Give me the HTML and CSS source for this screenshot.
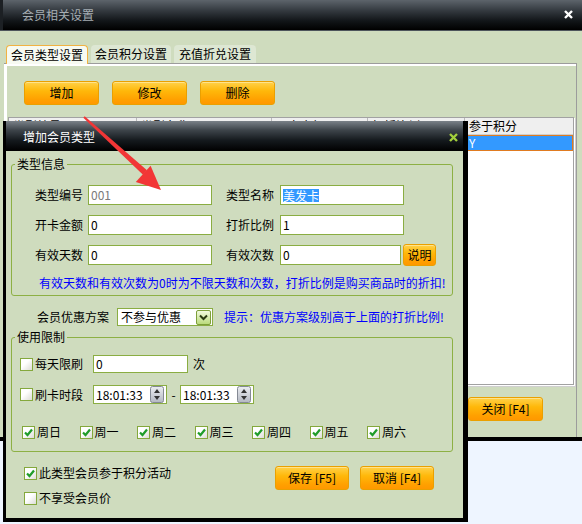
FILE: index.html
```html
<!DOCTYPE html>
<html lang="zh-CN">
<head>
<meta charset="utf-8">
<title>会员相关设置</title>
<link rel="stylesheet" href="styles.css">
</head>
<body>
<div class="desk">
  <div class="win">
    <div class="win-title">
      <span class="win-name">会员相关设置</span>
      <svg class="win-x" width="9" height="9" viewBox="0 0 9 9"><path d="M1 1L8 8M8 1L1 8" stroke="#fff" stroke-width="2.4"/></svg>
    </div>
    <div class="win-body">
      <div class="tabs">
        <div class="tab active">会员类型设置</div>
        <div class="tab">会员积分设置</div>
        <div class="tab">充值折兑设置</div>
      </div>
      <div class="panel">
        <div class="toolbar">
          <button class="obtn tb">增加</button>
          <button class="obtn tb">修改</button>
          <button class="obtn tb">删除</button>
        </div>
        <div class="grid">
          <div class="grow head">
            <div class="gc">类型编号</div><div class="gc">类型名称</div><div class="gc">开卡金额</div><div class="gc">打折比例</div><div class="gc">参于积分</div>
          </div>
          <div class="grow sel">
            <div class="gc">001</div><div class="gc">美发卡</div><div class="gc">0</div><div class="gc">1</div><div class="gc">Y</div>
          </div>
        </div>
        <div class="foot"><button class="obtn fb">关闭 [F4]</button></div>
      </div>
    </div>
  </div>

  <div class="dialog">
    <div class="dlg-title">
      <span>增加会员类型</span>
      <svg class="dlg-x" width="9" height="9" viewBox="0 0 9 9"><path d="M1 1L8 8M8 1L1 8" stroke="#a3cf3c" stroke-width="2.4"/></svg>
    </div>
    <div class="dlg-body">
      <fieldset class="group g1">
        <legend>类型信息</legend>
        <div class="gin in1">
          <div class="frow">
            <span class="lbl">类型编号</span><span class="inp w124 gray">001</span>
            <span class="lbl l2">类型名称</span><span class="inp w124"><span class="hl">美发卡</span></span>
          </div>
          <div class="frow">
            <span class="lbl">开卡金额</span><span class="inp w124">0</span>
            <span class="lbl l2">打折比例</span><span class="inp w124">1</span>
          </div>
          <div class="frow">
            <span class="lbl">有效天数</span><span class="inp w124">0</span>
            <span class="lbl l2">有效次数</span><span class="inp w121">0</span><button class="obtn sm">说明</button>
          </div>
          <div class="note">有效天数和有效次数为0时为不限天数和次数，打折比例是购买商品时的折扣!</div>
        </div>
      </fieldset>

      <div class="plan">
        <span class="plbl">会员优惠方案</span>
        <span class="select"><span class="sv">不参与优惠</span>
          <svg class="dd" width="15" height="15" viewBox="0 0 15 15"><defs><linearGradient id="gdd" x1="0" y1="0" x2="0" y2="1"><stop offset="0" stop-color="#f4fbe2"/><stop offset="1" stop-color="#b9da78"/></linearGradient></defs><rect x="0.5" y="0.5" width="14" height="14" rx="1.5" fill="url(#gdd)" stroke="#7e9f3a"/><path d="M4 5.5L7.5 9L11 5.5" fill="none" stroke="#2b3a12" stroke-width="2"/></svg>
        </span>
        <span class="hint">提示：优惠方案级别高于上面的打折比例!</span>
      </div>

      <fieldset class="group g2">
        <legend>使用限制</legend>
        <div class="gin in2">
          <div class="urow r1">
            <span class="cb"></span><span class="ct">每天限刷</span><span class="inp w95">0</span><span class="unit">次</span>
          </div>
          <div class="urow r2">
            <span class="cb"></span><span class="ct">刷卡时段</span>
            <span class="inp time"><span>18:01:33</span><svg class="spin" width="14" height="17" viewBox="0 0 14 17"><defs><linearGradient id="gsp" x1="0" y1="0" x2="0" y2="1"><stop offset="0" stop-color="#eceef2"/><stop offset="1" stop-color="#b4b8c2"/></linearGradient></defs><rect x="0.5" y="0.5" width="13" height="16" rx="2" fill="url(#gsp)" stroke="#858a94"/><path d="M7 3L10 7H4Z M4 10H10L7 14Z" fill="#333"/></svg></span>
            <span class="dash">-</span>
            <span class="inp time"><span>18:01:33</span><svg class="spin" width="14" height="17" viewBox="0 0 14 17"><rect x="0.5" y="0.5" width="13" height="16" rx="2" fill="url(#gsp)" stroke="#858a94"/><path d="M7 3L10 7H4Z M4 10H10L7 14Z" fill="#333"/></svg></span>
          </div>
          <div class="days">
            <span class="day"><span class="cb on"><svg width="11" height="11" viewBox="0 0 11 11"><path d="M2 5.5L4.5 8L9 2.5" fill="none" stroke="#1f9c2a" stroke-width="2.2"/></svg></span>周日</span>
            <span class="day"><span class="cb on"><svg width="11" height="11" viewBox="0 0 11 11"><path d="M2 5.5L4.5 8L9 2.5" fill="none" stroke="#1f9c2a" stroke-width="2.2"/></svg></span>周一</span>
            <span class="day"><span class="cb on"><svg width="11" height="11" viewBox="0 0 11 11"><path d="M2 5.5L4.5 8L9 2.5" fill="none" stroke="#1f9c2a" stroke-width="2.2"/></svg></span>周二</span>
            <span class="day"><span class="cb on"><svg width="11" height="11" viewBox="0 0 11 11"><path d="M2 5.5L4.5 8L9 2.5" fill="none" stroke="#1f9c2a" stroke-width="2.2"/></svg></span>周三</span>
            <span class="day"><span class="cb on"><svg width="11" height="11" viewBox="0 0 11 11"><path d="M2 5.5L4.5 8L9 2.5" fill="none" stroke="#1f9c2a" stroke-width="2.2"/></svg></span>周四</span>
            <span class="day"><span class="cb on"><svg width="11" height="11" viewBox="0 0 11 11"><path d="M2 5.5L4.5 8L9 2.5" fill="none" stroke="#1f9c2a" stroke-width="2.2"/></svg></span>周五</span>
            <span class="day"><span class="cb on"><svg width="11" height="11" viewBox="0 0 11 11"><path d="M2 5.5L4.5 8L9 2.5" fill="none" stroke="#1f9c2a" stroke-width="2.2"/></svg></span>周六</span>
          </div>
        </div>
      </fieldset>

      <div class="bottom">
        <div class="opts">
          <div class="opt"><span class="cb on"><svg width="11" height="11" viewBox="0 0 11 11"><path d="M2 5.5L4.5 8L9 2.5" fill="none" stroke="#1f9c2a" stroke-width="2.2"/></svg></span>此类型会员参于积分活动</div>
          <div class="opt o2"><span class="cb"></span>不享受会员价</div>
        </div>
        <button class="obtn db">保存 [F5]</button>
        <button class="obtn db">取消 [F4]</button>
      </div>
    </div>
  </div>

  <svg class="arrow" width="582" height="524" viewBox="0 0 582 524">
    <polygon points="83.3,117.7 84.7,116.3 147,170.3 143,174.7" fill="#f23636"/>
    <polygon points="161,190 135.8,182 150.6,165.8" fill="#f23636"/>
  </svg>
</div>
</body>
</html>
```

FILE: styles.css
```css
* { box-sizing: border-box; }

body {
  margin: 0;
  background: #eef5ff;
  font: 12px/14px "Noto Sans CJK SC", "Noto Sans", sans-serif;
  color: #000;
}

button {
  font: inherit;
  padding: 0;
  margin: 0;
  color: #000;
  cursor: default;
}

.desk {
  position: relative;
  width: 582px;
  height: 524px;
  overflow: hidden;
}

/* ---------- main window ---------- */
.win {
  width: 582px;
  height: 441px;
  display: flex;
  flex-direction: column;
  background: #cfdcbe;
  border-bottom: 4px solid #000;
}

.win-title {
  height: 31px;
  flex: none;
  display: flex;
  align-items: center;
  justify-content: space-between;
  padding: 0 9px 1px 22px;
  background: linear-gradient(#5d646b 0%, #343a40 35%, #111518 70%, #000 100%);
  border-bottom: 1px solid #4d555b;
  box-shadow: inset 3px 0 0 #1c2024;
  color: #a6aeb4;
}

.win-body {
  flex: 1;
  display: flex;
  flex-direction: column;
  padding: 14px 5px 0 4px;
}

.tabs {
  display: flex;
  gap: 3px;
  height: 18px;
  margin-left: 2px;
}

.tab {
  height: 18px;
  width: 80px;
  display: flex;
  align-items: center;
  justify-content: center;
  background: #dde7d3;
  border-radius: 4px 4px 0 0;
}

.tab:first-child, .tab:last-child { width: 82px; }

.tab.active {
  background: #f7faf1;
  border: 1px solid #f1b242;
  border-bottom: none;
  height: 19px;
  position: relative;
  z-index: 1;
}

.panel {
  flex: 1;
  border-top: 1px solid #9c9c9c;
  border-right: 1px solid #9c9c9c;
  box-shadow: inset 3px 2px 0 #fff;
  padding: 17px 2px 0 4px;
  display: flex;
  flex-direction: column;
}

.toolbar {
  display: flex;
  gap: 13px;
  padding-left: 16px;
}

.obtn {
  height: 24px;
  border: 1px solid #eaa000;
  border-radius: 3px;
  background: linear-gradient(#ffd24a 0%, #ffb80a 40%, #ffa000 80%, #ff9800 100%);
  box-shadow: inset 0 1px 0 #ffe38a;
  display: flex;
  align-items: center;
  justify-content: center;
}

.tb { width: 75px; }

.grid {
  margin-top: 12px;
  width: 566px;
  height: 268px;
  background: #fff;
  border: 1px solid #a2a2a2;
  box-shadow: 1px 1px 0 #fff, 2px 2px 0 #cfcfcf;
}

.grow {
  display: grid;
  grid-template-columns: 128px 135px 96px 97px 1fr;
}

.grow.head {
  height: 17px;
  background: #efefef;
  border-bottom: 1px solid #cfcfcf;
}

.grow.head .gc { border-right: 1px solid #b9b9b9; }
.grow.head .gc:last-child { border-right: none; }

.gc {
  padding-left: 4px;
  line-height: 16px;
  white-space: nowrap;
  overflow: hidden;
}

.grow.sel {
  height: 16px;
  background: #3399ff;
  color: #fff;
  box-shadow: inset 0 0 0 1px #e07b20;
}

.foot {
  margin-top: 12px;
  padding-left: 460px;
}

.fb { width: 75px; }

/* ---------- dialog ---------- */
.dialog {
  position: absolute;
  left: 3px;
  top: 121px;
  width: 465px;
  height: 401px;
  display: flex;
  flex-direction: column;
  background: #cfdcbe;
  border-left: 3px solid #000;
  border-right: 5px solid #000;
  border-bottom: 4px solid #000;
}

.dlg-title {
  height: 30px;
  flex: none;
  display: flex;
  align-items: center;
  justify-content: space-between;
  padding: 2px 5px 0 17px;
  background: linear-gradient(#7a8188 0%, #3e454b 30%, #14191d 65%, #000 100%);
  color: #fff;
}

.dlg-body {
  flex: 1;
  padding: 6px 10px 0 5px;
}

.group {
  margin: 0;
  padding: 0;
  width: 442px;
  border: 1px solid #8db044;
  border-radius: 3px;
  min-inline-size: 0;
}

.group legend {
  margin-left: 3px;
  padding: 0 2px;
  line-height: 14px;
}

.in1 { padding: 14px 0 5px 23px; }

.frow {
  display: flex;
  align-items: center;
  height: 20px;
}

.frow + .frow { margin-top: 10px; }

.lbl { width: 48px; margin-right: 5px; white-space: nowrap; }
.lbl.l2 { margin-left: 14px; margin-right: 6px; }

.inp {
  height: 20px;
  background: #fff;
  border: 1px solid #8aad42;
  padding-left: 2px;
  display: flex;
  align-items: center;
  white-space: nowrap;
}

.w124 { width: 124px; }
.w121 { width: 121px; }
.w95 { width: 95px; height: 18px; }

.gray { color: #7a7a7a; }

.hl {
  background: #3399ff;
  color: #fff;
  line-height: 13px;
}

.obtn.sm {
  width: 33px;
  height: 22px;
  margin-left: 2px;
}

.note {
  margin-top: 11px;
  margin-left: 4px;
  color: #0000ff;
  white-space: nowrap;
}

.plan {
  display: flex;
  align-items: center;
  height: 18px;
  margin-top: 12px;
  padding-left: 26px;
}

.plbl { width: 72px; margin-right: 8px; }

.select {
  width: 96px;
  height: 18px;
  background: #fff;
  border: 1px solid #8aad42;
  display: flex;
  align-items: center;
  justify-content: space-between;
  padding: 0 1px 0 3px;
}

.hint {
  margin-left: 11px;
  color: #0000ff;
  white-space: nowrap;
}

.g2 { margin-top: 4px; }

.in2 { padding: 11px 0 10px 8px; }

.urow {
  display: flex;
  align-items: center;
}

.r1 { height: 18px; }
.r2 { height: 19px; margin-top: 12px; }

.cb {
  width: 13px;
  height: 13px;
  flex: none;
  border: 1px solid #84a83c;
  background: linear-gradient(135deg, #ffffff 40%, #dcdcd6 100%);
  display: flex;
  align-items: center;
  justify-content: center;
}

.ct { margin-left: 2px; width: 48px; margin-right: 10px; }

.unit { margin-left: 5px; }

.time {
  width: 74px;
  height: 19px;
  justify-content: space-between;
  padding: 0 2px 0 2px;
}

.dash { width: 13px; text-align: center; }

.days {
  display: flex;
  align-items: center;
  height: 18px;
  margin-top: 19px;
  padding-left: 2px;
}

.day {
  flex: 0 0 57.5px;
  display: flex;
  align-items: center;
  gap: 2px;
}

.bottom {
  display: flex;
  align-items: flex-start;
  margin-top: 14px;
  padding-left: 13px;
}

.opts { width: 251px; }

.opt {
  display: flex;
  align-items: center;
  gap: 2px;
  height: 14px;
}

.opt.o2 { margin-top: 11px; }

.obtn.db { width: 74px; }
.obtn.db + .obtn.db { margin-left: 11px; }

/* ---------- annotation arrow ---------- */
.arrow {
  position: absolute;
  left: 0;
  top: 0;
  pointer-events: none;
}
```
